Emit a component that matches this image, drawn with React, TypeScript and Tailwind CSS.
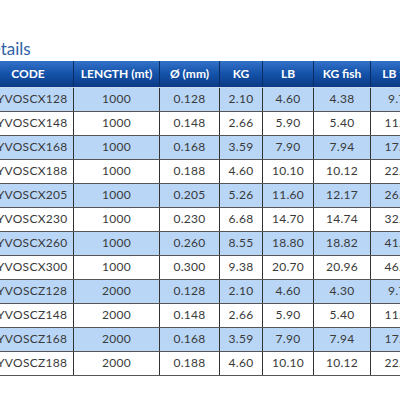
const rows = [
  ["CYVOSCX128", "1000", "0.128", "2.10", "4.60", "4.38", "9.70"],
  ["CYVOSCX148", "1000", "0.148", "2.66", "5.90", "5.40", "11.90"],
  ["CYVOSCX168", "1000", "0.168", "3.59", "7.90", "7.94", "17.50"],
  ["CYVOSCX188", "1000", "0.188", "4.60", "10.10", "10.12", "22.30"],
  ["CYVOSCX205", "1000", "0.205", "5.26", "11.60", "12.17", "26.80"],
  ["CYVOSCX230", "1000", "0.230", "6.68", "14.70", "14.74", "32.50"],
  ["CYVOSCX260", "1000", "0.260", "8.55", "18.80", "18.82", "41.50"],
  ["CYVOSCX300", "1000", "0.300", "9.38", "20.70", "20.96", "46.20"],
  ["CYVOSCZ128", "2000", "0.128", "2.10", "4.60", "4.30", "9.70"],
  ["CYVOSCZ148", "2000", "0.148", "2.66", "5.90", "5.40", "11.90"],
  ["CYVOSCZ168", "2000", "0.168", "3.59", "7.90", "7.94", "17.50"],
  ["CYVOSCZ188", "2000", "0.188", "4.60", "10.10", "10.12", "22.30"],
]

const headers = ["CODE", "LENGTH (mt)", "Ø (mm)", "KG", "LB", "KG fish", "LB fish"]
const widths = [91, 86, 60, 43, 51, 57, 60]

function App() {
  return (
    <div className="w-[400px] h-[400px] overflow-hidden bg-white font-['Lato',sans-serif]">
      {/* Section title, cut off on the left */}
      <div className="pt-[39px] ml-[-21px] h-[61px] text-[17px] leading-[20px] text-[#2f62a8]">
        Details
      </div>

      <table className="ml-[-18px] w-[448px] border-collapse table-fixed text-center">
        <colgroup>
          {widths.map((w, i) => (
            <col key={i} style={{ width: w }} />
          ))}
        </colgroup>
        <thead>
          <tr className="h-[26px] bg-gradient-to-b from-[#3272c8] via-[#1452a9] to-[#0b3a85]">
            {headers.map((h) => (
              <th
                key={h}
                className="border-x border-b border-x-[#0a2c64] border-b-[#c9d9ee] text-[12px] font-bold text-white whitespace-nowrap p-0">
                {h}
              </th>
            ))}
          </tr>
        </thead>
        <tbody>
          {rows.map((r, i) => (
            <tr
              key={r[0]}
              className={`h-[24px] ${i % 2 === 0 ? "bg-[#b9d6f7]" : "bg-white"}`}>
              {r.map((c, j) => (
                <td
                  key={j}
                  className="border-x border-b border-x-[#333] border-b-[#555] text-[12px] text-[#3a3a3a] p-0 whitespace-nowrap tracking-[0.3px]">
                  {c}
                </td>
              ))}
            </tr>
          ))}
        </tbody>
      </table>
    </div>
  )
}

export default App
